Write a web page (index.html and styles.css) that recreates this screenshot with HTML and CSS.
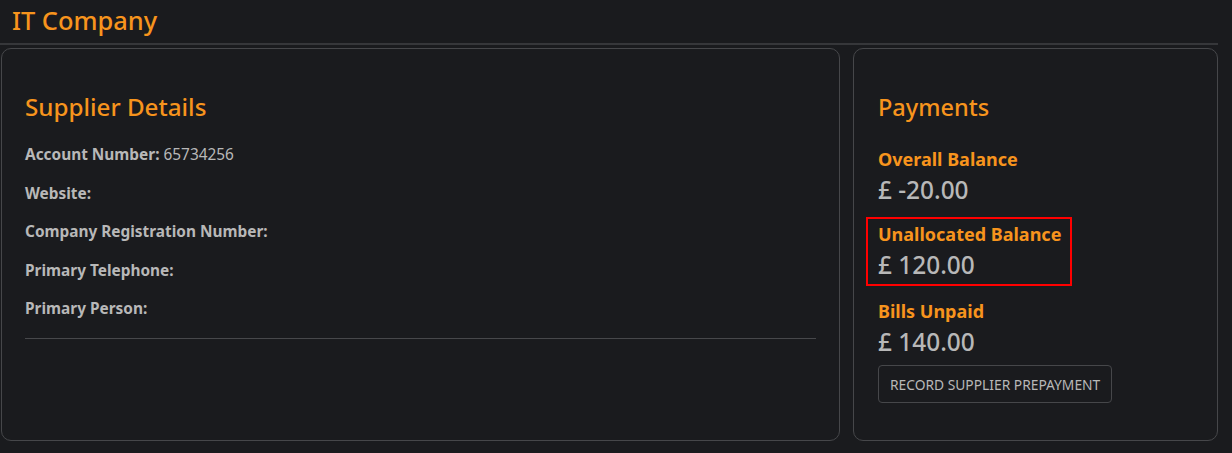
FILE: index.html
```html
<!DOCTYPE html>
<html lang="en">
  <head>
    <meta charset="UTF-8" />
    <meta name="viewport" content="width=device-width, initial-scale=1.0" />
    <title>IT Company</title>
    <link rel="stylesheet" href="styles.css">
  </head>
  <body>
    <header class="page-header">
      <h1>IT Company</h1>
    </header>
    <main class="layout">
      <section class="card details">
        <h2>Supplier Details</h2>
        <p><strong>Account Number:</strong> 65734256</p>
        <p><strong>Website:</strong></p>
        <p><strong>Company Registration Number:</strong></p>
        <p><strong>Primary Telephone:</strong></p>
        <p><strong>Primary Person:</strong></p>
        <hr />
      </section>
      <section class="card payments">
        <h2>Payments</h2>
        <div class="balance">
          <h3>Overall Balance</h3>
          <div class="amount">£ -20.00</div>
        </div>
        <div class="balance highlight">
          <h3>Unallocated Balance</h3>
          <div class="amount">£ 120.00</div>
        </div>
        <div class="balance unpaid">
          <h3>Bills Unpaid</h3>
          <div class="amount">£ 140.00</div>
        </div>
        <button type="button" class="prepay-btn">Record Supplier Prepayment</button>
      </section>
    </main>
  </body>
</html>
```

FILE: styles.css
```css
body {
  margin: 0;
  background-color: #1a1b1e;
  color: #b8b8b8;
  font-family: "Noto Sans", "Open Sans", sans-serif;
  font-size: 15.4px;
}
.page-header {
  height: 43px;
  border-bottom: 2px solid #36373a;
  margin-right: 14px;
}
h1 {
  margin: 0;
  padding: 2px 0 0 12px;
  font-size: 25.4px;
  font-weight: 500;
  color: #f7941d;
  line-height: 36px;
}
.layout {
  display: flex;
  gap: 13px;
  padding: 3px 14px 12px 1px;
}
.card {
  border: 1px solid #46474a;
  border-radius: 10px;
  box-sizing: border-box;
  height: 393px;
  padding: 0 23px;
}
.details {
  width: 839px;
}
.payments {
  flex: 1;
  padding: 0 24px;
}
h2 {
  margin: 42px 0 21px;
  font-size: 24.2px;
  font-weight: 500;
  line-height: 32px;
  color: #f7941d;
}
.details p {
  margin: 0;
  height: 38.5px;
  line-height: 22px;
}
.details hr {
  border: none;
  border-top: 1px solid #47484b;
  margin: 1px 0 0;
}
.payments h2 {
  margin-bottom: 22px;
  font-size: 23.5px;
}
h3 {
  margin: 0;
  font-size: 18px;
  line-height: 28px;
  color: #f7941d;
}
.amount {
  font-size: 24.4px;
  font-weight: 500;
  line-height: 34px;
  color: #b8b8b8;
}
.highlight {
  display: inline-block;
  border: 2px solid #ff0000;
  margin: 10px 0 0 -12px;
  padding: 1px 9px 2px 10px;
}
.unpaid {
  margin-top: 11px;
}
.prepay-btn {
  display: block;
  margin-top: 6px;
  background: transparent;
  border: 1px solid #46474a;
  border-radius: 4px;
  color: #b8b8b8;
  font-family: "Noto Sans", sans-serif;
  font-size: 13.8px;
  text-transform: uppercase;
  padding: 0 11px;
  height: 38px;
}
```
